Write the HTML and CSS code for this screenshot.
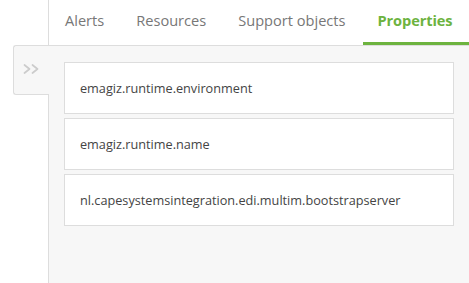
FILE: index.html
```html
<!DOCTYPE html>
<html>
<head>
<meta charset="utf-8">
<link rel="stylesheet" href="styles.css">
</head>
<body>
<div class="main">
  <nav class="tabs">
    <a class="tab">Alerts</a>
    <a class="tab">Resources</a>
    <a class="tab">Support objects</a>
    <a class="tab active">Properties</a>
  </nav>
  <div class="panel">
    <button class="toggle" aria-label="Expand">
      <svg width="17" height="10" viewBox="0 0 17 10" fill="none" stroke="#cccccc" stroke-width="1.7" stroke-linecap="round" stroke-linejoin="round">
        <path d="M1.5 1 L6.5 5 L1.5 9"/>
        <path d="M9.5 1 L14.5 5 L9.5 9"/>
      </svg>
    </button>
    <div class="list">
      <div class="card">emagiz.runtime.environment</div>
      <div class="card">emagiz.runtime.name</div>
      <div class="card">nl.capesystemsintegration.edi.multim.bootstrapserver</div>
    </div>
  </div>
</div>
</body>
</html>
```

FILE: styles.css
```css
html, body {
  margin: 0;
  padding: 0;
  background: #fff;
  font-family: "Open Sans", "Noto Sans", sans-serif;
}
.main {
  margin-left: 48px;
  height: 283px;
  border-left: 1px solid #ddd;
  display: flex;
  flex-direction: column;
}
.tabs {
  display: flex;
  gap: 2px;
  height: 45px;
  border-bottom: 1px solid #ddd;
  padding-left: 1px;
}
.tab {
  box-sizing: border-box;
  height: 45px;
  padding: 10px 15px 0;
  font-size: 14.6px;
  color: #777;
  border-bottom: 3px solid transparent;
  white-space: nowrap;
}
.tab.active {
  color: #6db33f;
  font-weight: 700;
  border-bottom-color: #6db33f;
  flex: 1;
  letter-spacing: -0.1px;
}
.panel {
  position: relative;
  flex: 1;
  background: #f7f7f7;
  padding: 16px 15px 0 15px;
}
.toggle {
  position: absolute;
  left: -36px;
  top: -1px;
  width: 36px;
  height: 50px;
  box-sizing: border-box;
  background: #f7f7f7;
  border: 1px solid #ddd;
  border-right: none;
  border-radius: 3px 0 0 3px;
  padding: 18px 0 0 9px;
  display: flex;
  align-items: flex-start;
  margin: 0;
}
.list {
  display: flex;
  flex-direction: column;
  gap: 4px;
}
.card {
  box-sizing: border-box;
  height: 52px;
  background: #fff;
  border: 1px solid #ddd;
  padding: 0 15px;
  display: flex;
  align-items: center;
  font-size: 12.7px;
  color: #444;
}
```
